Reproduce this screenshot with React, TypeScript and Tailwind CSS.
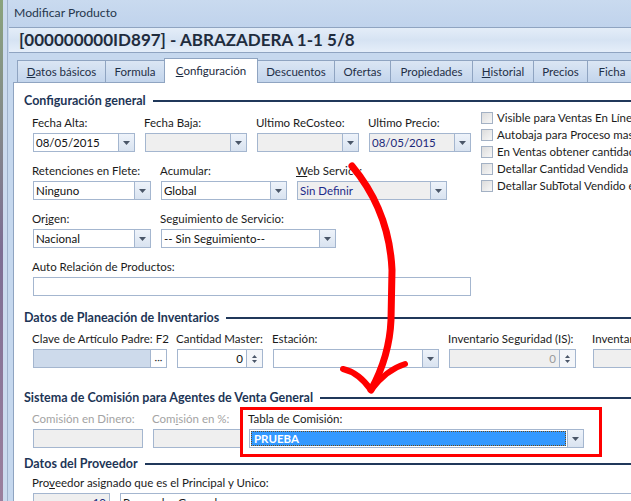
import React from "react";

type ComboProps = {
  w: string;
  value?: string;
  disabled?: boolean;
  valueClass?: string;
};

// dropdown field with the little arrow button on the right
function Combo({ w, value = "", disabled, valueClass = "text-[#111]" }: ComboProps) {
  return (
    <div
      className={`${w} h-[19px] flex border border-[#a4b6cf] ${disabled ? "bg-[#efefef]" : "bg-white"}`}
    >
      <div className={`flex-1 pl-[2px] leading-[17px] whitespace-nowrap overflow-hidden ${valueClass}`}>
        {value}
      </div>
      <div className="w-[16px] flex items-center justify-center border-l border-[#a4b6cf] bg-gradient-to-b from-[#eef3fa] to-[#d9e3f0]">
        <svg width="7" height="4" viewBox="0 0 7 4">
          <path d="M0 0h7L3.5 4z" fill="#4a5668" />
        </svg>
      </div>
    </div>
  );
}

function Spin({ w, value, disabled }: { w: string; value: string; disabled?: boolean }) {
  return (
    <div className={`${w} h-[19px] flex border border-[#a4b6cf] ${disabled ? "bg-[#efefef]" : "bg-white"}`}>
      <div className={`flex-1 pr-[3px] text-right leading-[17px] ${disabled ? "text-[#9a9a9a]" : "text-[#111]"}`}>
        {value}
      </div>
      <div className="w-[16px] flex flex-col items-center justify-center gap-[2px] border-l border-[#a4b6cf] bg-[#f4f6f9]">
        <svg width="5" height="3" viewBox="0 0 5 3">
          <path d="M0 3h5L2.5 0z" fill="#4a5668" />
        </svg>
        <svg width="5" height="3" viewBox="0 0 5 3">
          <path d="M0 0h5L2.5 3z" fill="#4a5668" />
        </svg>
      </div>
    </div>
  );
}

function Box({ w, children, className = "" }: { w: string; children?: React.ReactNode; className?: string }) {
  return (
    <div className={`${w} h-[19px] border border-[#a4b6cf] pl-[2px] leading-[17px] whitespace-nowrap overflow-hidden ${className}`}>
      {children}
    </div>
  );
}

// label above a control; the label may run past the control's width
function Field({
  w,
  label,
  children,
  labelClass = "text-[#1b1b1b]",
}: {
  w: string;
  label: React.ReactNode;
  children: React.ReactNode;
  labelClass?: string;
}) {
  return (
    <div className={`${w} flex flex-col shrink-0`}>
      <div className={`h-[16px] leading-[16px] -ml-px whitespace-nowrap ${labelClass}`}>{label}</div>
      <div className="mt-[2px]">{children}</div>
    </div>
  );
}

function Heading({ title, className = "" }: { title: string; className?: string }) {
  return (
    <div className={`flex items-center h-[16px] ${className}`}>
      <span className="font-bold text-[12.5px] text-[#1d3556] whitespace-nowrap">{title}</span>
      <div className="flex-1 ml-[7px] h-[2px] bg-[#20385a]" />
    </div>
  );
}

const tabs = [
  { t: <><u>D</u>atos básicos</>, w: "w-[89px]" },
  { t: "Formula", w: "w-[60px]" },
  { t: <><u>C</u>onfiguración</>, w: "w-[94px]", active: true },
  { t: "Descuentos", w: "w-[78px]" },
  { t: "Ofertas", w: "w-[57px]" },
  { t: "Propiedades", w: "w-[83px]" },
  { t: <><u>H</u>istorial</>, w: "w-[62px]" },
  { t: "Precios", w: "w-[55px]" },
  { t: "Ficha", w: "w-[50px]" },
];

const checks = [
  "Visible para Ventas En Línea",
  "Autobaja para Proceso masivo",
  "En Ventas obtener cantidad",
  "Detallar Cantidad Vendida en",
  "Detallar SubTotal Vendido en",
];

export default function App() {
  return (
    <div className="relative w-[631px] h-[501px] overflow-hidden flex bg-[#c6d8ee] font-['Segoe_UI','Lato',sans-serif] text-[11.5px] text-[#1b1b1b]">
      {/* desktop behind the window */}
      <div className="w-[3px] shrink-0 bg-gradient-to-b from-[#8aa37c] via-[#7d6d93] to-[#9b7f9d]" />
      <div className="w-[5px] shrink-0 bg-[#cbdaee] border-r border-[#9fb2cc]" />

      <div className="flex-1 flex flex-col min-w-0">
        {/* title bar */}
        <div className="h-[27px] shrink-0 flex items-center pl-[6px] text-[12.2px] text-[#26364c] bg-gradient-to-b from-[#c9daef] to-[#c0d3ec]">
          Modificar Producto
        </div>

        {/* header */}
        <div className="h-[26px] shrink-0 ml-[1px] flex items-center pl-[10px] border-y border-[#8fa4c1] bg-gradient-to-b from-[#e4edf8] via-[#d6e3f3] to-[#e5eef9]">
          <span className="font-bold text-[17px] text-[#1f2c3d] whitespace-nowrap">
            [000000000ID897] - ABRAZADERA 1-1 5/8
          </span>
        </div>

        {/* tabs */}
        <div className="h-[29px] shrink-0 flex items-end pl-[10px] pt-[4px]">
          {tabs.map((tab, i) =>
            tab.active ? (
              <div
                key={i}
                className={`${tab.w} shrink-0 h-[25px] -mb-px -ml-px z-10 flex items-center justify-center bg-white border border-b-0 border-[#8fa4c1] text-[#1b2a40] whitespace-nowrap`}
              >
                {tab.t}
              </div>
            ) : (
              <div
                key={i}
                className={`${tab.w} shrink-0 h-[22px] flex items-center justify-center border border-b-0 border-[#8fa4c1] -ml-px bg-gradient-to-b from-[#dbe6f4] to-[#c3d5ec] text-[#1f2f47] whitespace-nowrap`}
              >
                {tab.t}
              </div>
            )
          )}
        </div>

        {/* tab page */}
        <div className="flex-1 ml-[5px] bg-white border-l border-t border-[#8fa4c1] pt-[10px] pl-[10px]">
          <Heading title="Configuración general" />

          <div className="flex">
            <div className="w-[456px] shrink-0 pl-[9px] pt-[6px] flex flex-col gap-[11px]">
              <div className="flex gap-[10px]">
                <Field w="w-[102px]" label="Fecha Alta:">
                  <Combo w="w-[102px]" value="08/05/2015" />
                </Field>
                <Field w="w-[102px]" label="Fecha Baja:">
                  <Combo w="w-[102px]" disabled />
                </Field>
                <Field w="w-[102px]" label="Ultimo ReCosteo:">
                  <Combo w="w-[102px]" disabled />
                </Field>
                <Field w="w-[102px]" label="Ultimo Precio:">
                  <Combo w="w-[102px]" value="08/05/2015" disabled valueClass="text-[#1d2a7a]" />
                </Field>
              </div>

              <div className="flex gap-[10px]">
                <Field w="w-[118px]" label="Retenciones en Flete:">
                  <Combo w="w-[118px]" value="Ninguno" />
                </Field>
                <Field w="w-[126px]" label="Acumular:">
                  <Combo w="w-[126px]" value="Global" />
                </Field>
                <Field w="w-[150px]" label={<><u>W</u>eb Service:</>}>
                  <Combo w="w-[150px]" value="Sin Definir" disabled valueClass="text-[#1d2a8a]" />
                </Field>
              </div>

              <div className="flex gap-[10px]">
                <Field w="w-[118px]" label={<>Or<u>i</u>gen:</>}>
                  <Combo w="w-[118px]" value="Nacional" />
                </Field>
                <Field w="w-[175px]" label="Seguimiento de Servicio:">
                  <Combo w="w-[175px]" value="-- Sin Seguimiento--" />
                </Field>
              </div>

              <Field w="w-[438px]" label="Auto Relación de Productos:">
                <Box w="w-[438px]" />
              </Field>
            </div>

            <div className="flex flex-col pl-[1px]">
              {checks.map((c) => (
                <div key={c} className="h-[17px] flex items-center gap-[4px] whitespace-nowrap">
                  <div className="w-[12px] h-[12px] border border-[#a3b1c4] bg-gradient-to-br from-[#dcdcdc] to-[#f7f7f7]" />
                  <span>{c}</span>
                </div>
              ))}
            </div>
          </div>

          <Heading title="Datos de Planeación de Inventarios" className="mt-[14px]" />
          <div className="flex pl-[9px] pt-[5px]">
            <div className="mr-[10px]">
              <Field w="w-[134px]" label="Clave de Artículo Padre: F2">
                <div className="w-[134px] h-[19px] flex border border-[#a4b6cf] bg-[#cddaeb]">
                  <div className="flex-1" />
                  <div className="w-[16px] flex items-center justify-center border-l border-[#a4b6cf] bg-white text-[10px] leading-none text-[#333]">
                    ···
                  </div>
                </div>
              </Field>
            </div>
            <div className="mr-[10px]">
              <Field w="w-[86px]" label="Cantidad Master:">
                <Spin w="w-[86px]" value="0" />
              </Field>
            </div>
            <div className="mr-[10px]">
              <Field w="w-[166px]" label="Estación:">
                <Combo w="w-[166px]" />
              </Field>
            </div>
            <div className="mr-[17px]">
              <Field w="w-[127px]" label="Inventario Seguridad (IS):">
                <Spin w="w-[127px]" value="0" disabled />
              </Field>
            </div>
            <Field w="w-[80px]" label="Inventario Máximo:">
              <Box w="w-[80px]" className="bg-[#efefef]" />
            </Field>
          </div>

          <Heading title="Sistema de Comisión para Agentes de Venta General" className="mt-[22px]" />
          <div className="flex pl-[9px] pt-[5px]">
            <div className="mr-[10px]">
              <Field w="w-[110px]" label="Comisión en Dinero:" labelClass="text-[#a3a3a3]">
                <Box w="w-[110px]" className="bg-[#efefef]" />
              </Field>
            </div>
            <div className="mr-[8px]">
              <Field w="w-[88px]" label={<>Com<u>i</u>sión en %:</>} labelClass="text-[#a3a3a3]">
                <Box w="w-[88px]" className="bg-[#efefef]" />
              </Field>
            </div>
            <Field w="w-[335px]" label="Tabla de Comisión:">
              <div className="w-[335px] h-[19px] flex border border-[#a4b6cf] bg-white">
                <div className="flex-1 m-[1px] border border-dotted border-[#6b4a1a] bg-[#3399ff] pl-[2px] leading-[13px] font-bold text-white">
                  PRUEBA
                </div>
                <div className="w-[16px] flex items-center justify-center border-l border-[#a4b6cf] bg-gradient-to-b from-[#eef3fa] to-[#d9e3f0]">
                  <svg width="7" height="4" viewBox="0 0 7 4">
                    <path d="M0 0h7L3.5 4z" fill="#4a5668" />
                  </svg>
                </div>
              </div>
            </Field>
          </div>

          <Heading title="Datos del Proveedor" className="mt-[8px]" />
          <div className="pl-[9px] pt-[3px]">
            <Field w="w-[600px]" label={<>Pro<u>v</u>eedor asignado que es el Principal y Unico:</>}>
              <div className="flex gap-[10px]">
                <Box w="w-[78px]" className="bg-[#efefef] text-right pr-[3px] text-[#1d2a7a]">
                  10
                </Box>
                <Box w="w-[520px]">Proveedor General</Box>
              </div>
            </Field>
          </div>
        </div>
      </div>

      {/* annotation: red frame and hand-drawn arrow */}
      <div className="absolute left-[240px] top-[407px] w-[362px] h-[50px] border-[3px] border-[#ff0000]" />
      <svg className="absolute left-0 top-0 pointer-events-none" width="631" height="501" viewBox="0 0 631 501">
        <path
          d="M352 166 C372 190 390 225 392 270 L391 320 C390 345 383 368 371 390"
          fill="none"
          stroke="#ff0000"
          strokeWidth="7"
          strokeLinecap="round"
        />
        <path
          d="M343 369 C356 372 364 380 371 390 C381 377 392 368 405 364"
          fill="none"
          stroke="#ff0000"
          strokeWidth="6"
          strokeLinecap="round"
          strokeLinejoin="round"
        />
      </svg>
    </div>
  );
}
